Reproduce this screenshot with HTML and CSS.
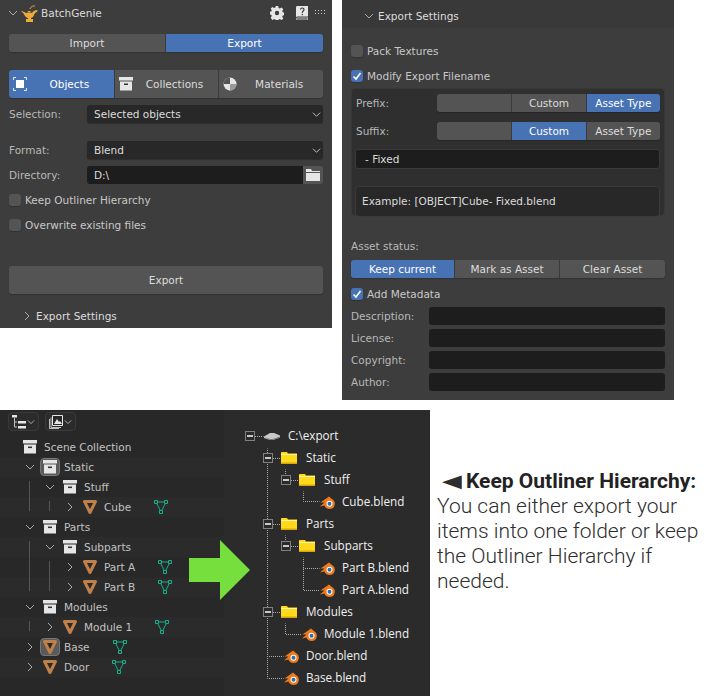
FILE: index.html
```html
<!DOCTYPE html>
<html lang="en">
<head>
    <meta charset="UTF-8">
    <meta name="viewport" content="width=device-width, initial-scale=1.0">
    <title>BatchGenie Export</title>
    <link rel="stylesheet" href="styles.css">
</head>
<body>
    <svg class="defs" width="0" height="0">
        <symbol id="box" viewBox="0 0 14 14">
            <path d="M0 0h14v3.500H0z" fill="#e6e6e6"/>
            <path d="M1 4.500h12V13.500H1z" fill="#e6e6e6"/>
            <path d="M5 6.500h4v1.600H5z" fill="#333"/>
        </symbol>
        <symbol id="cone" viewBox="0 0 14 14">
            <path d="M1.500 1.500h11L7 12.500z" fill="#2b2b2b" stroke="#c0804a" stroke-width="3" stroke-linejoin="round"/>
        </symbol>
        <symbol id="mesh" viewBox="0 0 14 14">
            <path d="M2 2h10L7 12z" fill="none" stroke="#12b28c" stroke-width="1"/>
            <path d="M.5.500h3v3h-3zM10.500.500h3v3h-3zM5.500 10.500h3v3h-3z" fill="#282828" stroke="#12b28c" stroke-width="1"/>
        </symbol>
        <symbol id="folder" viewBox="0 0 16 12">
            <path d="M0 1C0 .300.300 0 1 0h5l1 1.500h9V12H0z" fill="#ffd91a"/>
            <path d="M0 2h16v1H0z" fill="#fff4a0"/>
            <path d="M0 10.500h16V12H0z" fill="#d9a40c"/>
        </symbol>
        <symbol id="blend" viewBox="0 0 15 13">
            <path d="M9 .5 .5 6.500h4L0 10.500l4.500-1C5 11.500 7 13 9.500 13a5.300 5.300 0 0 0 2.800-9.800z" fill="#ee7a1c"/>
            <circle cx="9.500" cy="7.800" r="3" fill="#fff"/>
            <circle cx="9.500" cy="7.800" r="2" fill="#2f6da8"/>
        </symbol>
        <symbol id="chev-down" viewBox="0 0 10 10">
            <path d="M1 3l4 4 4-4" fill="none" stroke="currentColor" stroke-width="1"/>
        </symbol>
        <symbol id="chev-right" viewBox="0 0 10 10">
            <path d="M3 1l4 4-4 4" fill="none" stroke="currentColor" stroke-width="1"/>
        </symbol>
    </svg>

    <div class="top-row">
        <section class="panel panel-main">
            <div class="panel-head">
                <svg class="chev"><use href="#chev-down"/></svg>
                <svg class="lamp" viewBox="0 0 17 17">
                    <path d="M0 6c2 0 3 1 5 2h6c1-2 3-3 5.500-3L16 7c-1.500 0-2.500 2-3.500 4-.5 1.500-2.500 2-2.500 2v1h2v3H5v-3h2v-1C4 13 4 9 0 6z" fill="#eeab3c"/>
                    <path d="M6 7.500c1-2 3.500-2 4.500 0z" fill="#eeab3c"/>
                    <path d="M9 4c1-3 3-3 5-3" fill="none" stroke="#eeab3c" stroke-width="1"/>
                </svg>
                <span class="panel-title">BatchGenie</span>
                <svg class="gear" viewBox="0 0 14 14">
                    <path d="M5.800 0h2.400l.4 2 1.300.6 1.700-1.100 1.700 1.700-1.100 1.700.6 1.300 2 .4v2.400l-2 .4-.6 1.300 1.100 1.700-1.700 1.700-1.700-1.100-1.300.6-.4 2H5.800l-.4-2-1.300-.6-1.700 1.100L.7 11.800l1.100-1.700-.6-1.300-2-.4V6l2-.4.6-1.300L.7 2.600 2.400.9l1.700 1.100 1.300-.6z" fill="#e6e6e6"/>
                    <circle cx="7" cy="7" r="2.200" fill="#3d3d3d"/>
                </svg>
                <svg class="book" viewBox="0 0 12 14">
                    <path d="M0 1.500C0 .5.500 0 1.500 0H12v10.500H1.500C.500 10.500 0 11 0 12z" fill="#e6e6e6"/>
                    <path d="M1 12h11v2H1.500C.500 14 0 13 1 12z" fill="none" stroke="#e6e6e6" stroke-width=".8"/>
                    <path d="M4.500 3.500C4.500 1.500 8 1.500 8 3.500 8 5 6.300 5 6.300 6.800M6.300 7.800v1.400" fill="none" stroke="#3d3d3d" stroke-width="1.200"/>
                </svg>
                <span class="grip"></span>
            </div>

            <div class="seg mode-seg">
                <button class="seg-btn">Import</button>
                <button class="seg-btn on">Export</button>
            </div>

            <div class="seg seg-3 tabs">
                <button class="seg-btn tab on">
                    <svg class="tab-icon" viewBox="0 0 14 14">
                        <path d="M.5 3V.5H3M11 .5h2.500V3M13.500 11v2.500H11M3 13.500H.5V11" fill="none" stroke="#e6e6e6" stroke-width="1"/>
                        <path d="M3 3h8v8H3z" fill="#fff"/>
                    </svg>
                    <span>Objects</span>
                </button>
                <button class="seg-btn tab">
                    <svg class="tab-icon"><use href="#box"/></svg>
                    <span>Collections</span>
                </button>
                <button class="seg-btn tab">
                    <svg class="tab-icon" viewBox="0 0 14 14">
                        <circle cx="7" cy="7" r="6.500" fill="#e6e6e6"/>
                        <path d="M7 7V.5A6.500 6.500 0 0 0 .5 7z" fill="#555"/>
                        <path d="M7 7h6.500A6.500 6.500 0 0 1 7 13.500z" fill="#999"/>
                    </svg>
                    <span>Materials</span>
                </button>
            </div>

            <div class="field-row first">
                <label class="field-label">Selection:</label>
                <div class="dropdown">Selected objects<svg class="drop-chev"><use href="#chev-down"/></svg></div>
            </div>
            <div class="field-row format">
                <label class="field-label">Format:</label>
                <div class="dropdown">Blend<svg class="drop-chev"><use href="#chev-down"/></svg></div>
            </div>
            <div class="field-row dir">
                <label class="field-label">Directory:</label>
                <div class="input dir-input">D:\</div>
                <button class="folder-btn">
                    <svg viewBox="0 0 14 12"><path d="M0 0h5l1 2h8v1H0zM0 4h14v8H0z" fill="#e6e6e6"/></svg>
                </button>
            </div>

            <div class="check keep"><span class="box"></span>Keep Outliner Hierarchy</div>
            <div class="check overwrite"><span class="box"></span>Overwrite existing files</div>

            <button class="big-btn">Export</button>

            <div class="sub-head">
                <svg class="chev"><use href="#chev-right"/></svg>
                <span>Export Settings</span>
            </div>
        </section>

        <section class="panel panel-settings">
            <div class="settings-head">
                <svg class="chev"><use href="#chev-down"/></svg>
                <span>Export Settings</span>
            </div>
            <div class="settings-body">
                <div class="check"><span class="box"></span>Pack Textures</div>
                <div class="check modify"><span class="box ticked"><svg viewBox="0 0 12 12"><path d="M2.500 6.500l2.500 2.500 4.500-6" fill="none" stroke="#fff" stroke-width="1.600"/></svg></span>Modify Export Filename</div>

                <div class="inset">
                    <div class="name-row">
                        <label class="field-label">Prefix:</label>
                        <div class="seg seg-3 name-seg">
                            <button class="seg-btn"></button>
                            <button class="seg-btn">Custom</button>
                            <button class="seg-btn on">Asset Type</button>
                        </div>
                    </div>
                    <div class="name-row suffix">
                        <label class="field-label">Suffix:</label>
                        <div class="seg seg-3 name-seg">
                            <button class="seg-btn"></button>
                            <button class="seg-btn on">Custom</button>
                            <button class="seg-btn">Asset Type</button>
                        </div>
                    </div>
                    <div class="input fixed-input">- Fixed</div>
                    <div class="example">Example: [OBJECT]Cube- Fixed.blend</div>
                </div>

                <div class="status-label field-label">Asset status:</div>
                <div class="seg status-seg">
                    <button class="seg-btn on">Keep current</button>
                    <button class="seg-btn">Mark as Asset</button>
                    <button class="seg-btn">Clear Asset</button>
                </div>
                <div class="check meta"><span class="box ticked"><svg viewBox="0 0 12 12"><path d="M2.500 6.500l2.500 2.500 4.500-6" fill="none" stroke="#fff" stroke-width="1.600"/></svg></span>Add Metadata</div>
                <div class="meta-row"><label class="field-label">Description:</label><div class="input"></div></div>
                <div class="meta-row"><label class="field-label">License:</label><div class="input"></div></div>
                <div class="meta-row"><label class="field-label">Copyright:</label><div class="input"></div></div>
                <div class="meta-row"><label class="field-label">Author:</label><div class="input"></div></div>
            </div>
        </section>
    </div>

    <div class="bottom-row">
        <section class="outliner">
            <div class="outliner-bar">
                <span class="bar-btn">
                    <svg class="bar-icon" viewBox="0 0 14 14"><path d="M0 0h5v2.500H0zM6 6h8v2.500H6zM6 11h8v2.500H6z" fill="#e6e6e6"/><path d="M2.500 3v9H5M2.500 7H5" fill="none" stroke="#e6e6e6" stroke-width=".8"/></svg>
                    <svg class="bar-chev"><use href="#chev-down"/></svg>
                </span>
                <span class="bar-btn">
                    <svg class="bar-icon" viewBox="0 0 14 14"><path d="M3.500.5h10v10h-10z" fill="#282828" stroke="#e6e6e6"/><path d="M5 9l3-5 2 3 1-1 2 3z" fill="#e6e6e6"/><path d="M2 2.500v10h10M.5 4v9.500h9.500" fill="none" stroke="#e6e6e6" stroke-width=".8"/></svg>
                    <svg class="bar-chev"><use href="#chev-down"/></svg>
                </span>
            </div>
            <div class="row root"><svg class="row-icon"><use href="#box"/></svg><span>Scene Collection</span></div>
            <div class="row d1 alt"><svg class="twist"><use href="#chev-down"/></svg><span class="active-icon"><svg class="row-icon"><use href="#box"/></svg></span><span>Static</span></div>
            <div class="row d2"><svg class="twist"><use href="#chev-down"/></svg><svg class="row-icon"><use href="#box"/></svg><span>Stuff</span></div>
            <div class="row d3 alt"><svg class="twist"><use href="#chev-right"/></svg><svg class="row-icon"><use href="#cone"/></svg><span>Cube</span><svg class="mesh-icon"><use href="#mesh"/></svg></div>
            <div class="row d1"><svg class="twist"><use href="#chev-down"/></svg><svg class="row-icon"><use href="#box"/></svg><span>Parts</span></div>
            <div class="row d2 alt"><svg class="twist"><use href="#chev-down"/></svg><svg class="row-icon"><use href="#box"/></svg><span>Subparts</span></div>
            <div class="row d3"><svg class="twist"><use href="#chev-right"/></svg><svg class="row-icon"><use href="#cone"/></svg><span>Part A</span><svg class="mesh-icon"><use href="#mesh"/></svg></div>
            <div class="row d3 alt"><svg class="twist"><use href="#chev-right"/></svg><svg class="row-icon"><use href="#cone"/></svg><span>Part B</span><svg class="mesh-icon"><use href="#mesh"/></svg></div>
            <div class="row d1"><svg class="twist"><use href="#chev-down"/></svg><svg class="row-icon"><use href="#box"/></svg><span>Modules</span></div>
            <div class="row d2 alt"><svg class="twist"><use href="#chev-right"/></svg><svg class="row-icon"><use href="#cone"/></svg><span>Module 1</span><svg class="mesh-icon"><use href="#mesh"/></svg></div>
            <div class="row d1"><svg class="twist"><use href="#chev-right"/></svg><span class="active-icon"><svg class="row-icon"><use href="#cone"/></svg></span><span>Base</span><svg class="mesh-icon"><use href="#mesh"/></svg></div>
            <div class="row d1 alt"><svg class="twist"><use href="#chev-right"/></svg><svg class="row-icon"><use href="#cone"/></svg><span>Door</span><svg class="mesh-icon"><use href="#mesh"/></svg></div>
            <svg class="guides" width="224" height="286">
                <path d="M29.500 71v30M49.500 91v10M29.500 131v50M49.500 151v30M29.500 211v10" stroke="#555" fill="none"/>
            </svg>
        </section>

        <section class="tree">
            <svg class="tree-lines" width="206" height="286">
                <path d="M26 26h14M44 48h14M62 70h14M80 81v10h16M44 114h14M62 136h14M80 147v33h16M80 158h16M44 202h14M62 213v11h16M44 38v230M44 246h16M44 268h16M62 59v12M62 125v12" stroke="#aaa" stroke-dasharray="1 1" stroke-dashoffset=".5" fill="none" transform="translate(-.5 .5)"/>
            </svg>
            <div class="tree-row t0">
                <span class="exp"></span>
                <svg class="drive" viewBox="0 0 16 7"><path d="M0 3.500 6 0h4l6 2.500v2L9 7H6L0 5z" fill="#c9c9c9"/><path d="M0 4l6 3h3l7-2.500v-1L9 6H6z" fill="#777"/></svg>
                <span>C:\export</span>
            </div>
            <div class="tree-row t1"><span class="exp"></span><svg class="folder"><use href="#folder"/></svg><span>Static</span></div>
            <div class="tree-row t2"><span class="exp"></span><svg class="folder"><use href="#folder"/></svg><span>Stuff</span></div>
            <div class="tree-row t3"><svg class="blend"><use href="#blend"/></svg><span>Cube.blend</span></div>
            <div class="tree-row t1"><span class="exp"></span><svg class="folder"><use href="#folder"/></svg><span>Parts</span></div>
            <div class="tree-row t2"><span class="exp"></span><svg class="folder"><use href="#folder"/></svg><span>Subparts</span></div>
            <div class="tree-row t3"><svg class="blend"><use href="#blend"/></svg><span>Part B.blend</span></div>
            <div class="tree-row t3"><svg class="blend"><use href="#blend"/></svg><span>Part A.blend</span></div>
            <div class="tree-row t1"><span class="exp"></span><svg class="folder"><use href="#folder"/></svg><span>Modules</span></div>
            <div class="tree-row t2b"><svg class="blend"><use href="#blend"/></svg><span>Module 1.blend</span></div>
            <div class="tree-row t1b"><svg class="blend"><use href="#blend"/></svg><span>Door.blend</span></div>
            <div class="tree-row t1b"><svg class="blend"><use href="#blend"/></svg><span>Base.blend</span></div>
        </section>

        <section class="note">
            <p><span class="note-arrow">◀</span><b>Keep Outliner Hierarchy:</b> You can either export your items into one folder or keep the Outliner Hierarchy if needed.</p>
        </section>

        <svg class="arrow" width="62" height="60" viewBox="0 0 62 60"><path d="M0 18h31V0l30 30-30 30V42H0z" fill="#76de3d"/></svg>
    </div>
</body>
</html>
```

FILE: styles.css
```css
:root {
    --panel: #3d3d3d;
    --btn: #545454;
    --active: #4772b3;
    --input: #1d1d1d;
    --drop: #282828;
    --label: #b8b8b8;
    --text: #dcdcdc;
}
body {
    margin: 0;
    width: 710px;
    height: 696px;
    overflow: hidden;
    background-color: #fff;
    font-family: 'DejaVu Sans', sans-serif;
    font-size: 10.5px;
}
button {
    font: inherit;
    border: none;
    padding: 0;
    color: inherit;
}
.defs {
    position: absolute;
}
.top-row {
    display: flex;
    align-items: flex-start;
    gap: 10px;
    height: 400px;
    margin-bottom: 10px;
}
.bottom-row {
    position: relative;
    display: flex;
    height: 286px;
}
.panel {
    background-color: var(--panel);
    color: var(--text);
    width: 332px;
    box-sizing: border-box;
}
.panel-main {
    height: 328px;
    padding: 0 9px;
}
.panel-settings {
    height: 400px;
}
.chev {
    width: 10px;
    height: 10px;
    color: #aaa;
    flex: none;
}

/* top panel */
.panel-head {
    display: flex;
    align-items: center;
    height: 26px;
}
.panel-head .chev {
    margin-left: -1px;
}
.lamp {
    width: 17px;
    height: 17px;
    margin-left: 3px;
}
.panel-title {
    margin-left: 3px;
    flex: 1;
}
.gear {
    width: 14px;
    height: 14px;
}
.book {
    width: 12px;
    height: 14px;
    margin-left: 12px;
}
.grip {
    width: 12px;
    height: 6px;
    margin: 0 -3px 2px 6px;
    background-image: radial-gradient(circle, #ccc 0.7px, transparent 0.9px);
    background-size: 3px 3px;
}
.seg {
    display: grid;
    border-radius: 3px;
    overflow: hidden;
    height: 18px;
    box-shadow: 0 1px 1px rgba(0, 0, 0, 0.2);
}
.seg-3 {
    grid-template-columns: 1fr 1fr 1fr;
}
.seg-btn {
    background-color: var(--btn);
    color: var(--text);
    text-align: center;
    border-left: 1px solid #3a3a3a;
    white-space: nowrap;
}
.seg-btn:first-child {
    border-left: none;
}
.seg-btn.on {
    background-color: var(--active);
    color: #fff;
}
.mode-seg {
    margin-top: 8px;
    grid-template-columns: 156px 158px;
}
.tabs {
    margin-top: 18px;
    height: 28px;
}
.tab {
    display: flex;
    align-items: center;
    padding-left: 4px;
}
.tab span {
    flex: 1;
    padding-right: 2px;
}
.tab-icon {
    width: 14px;
    height: 14px;
}
.field-row {
    display: flex;
    height: 18px;
    align-items: center;
}
.field-row.first {
    margin-top: 7px;
}
.field-row.format {
    margin-top: 18px;
}
.field-row.dir {
    margin-top: 7px;
}
.field-label {
    color: var(--label);
}
.field-row .field-label {
    width: 78px;
    flex: none;
}
.dropdown {
    display: flex;
    align-items: center;
    justify-content: space-between;
    flex: 1;
    height: 18px;
    padding: 0 2px 0 7px;
    background-color: var(--drop);
    border-radius: 3px;
    box-shadow: 0 1px 1px rgba(0, 0, 0, 0.25);
}
.drop-chev {
    width: 9px;
    height: 9px;
    color: #ccc;
}
.input {
    height: 18px;
    background-color: var(--input);
    border-radius: 3px;
    box-sizing: border-box;
    line-height: 18px;
}
.dir-input {
    flex: 1;
    padding-left: 7px;
    border-radius: 3px 0 0 3px;
}
.folder-btn {
    display: flex;
    align-items: center;
    justify-content: center;
    width: 20px;
    height: 18px;
    background-color: var(--btn);
    border-radius: 0 3px 3px 0;
}
.folder-btn svg {
    width: 14px;
    height: 12px;
}
.check {
    display: flex;
    align-items: center;
    gap: 4px;
    height: 13px;
    color: #c8c8c8;
}
.box {
    width: 12px;
    height: 12px;
    background-color: #545454;
    border-radius: 3px;
    flex: none;
    box-shadow: 0 1px 1px rgba(0, 0, 0, 0.2);
}
.box.ticked {
    background-color: var(--active);
}
.box svg {
    display: block;
}
.keep {
    margin-top: 9px;
}
.overwrite {
    margin-top: 12px;
}
.big-btn {
    display: block;
    width: 100%;
    height: 28px;
    margin-top: 35px;
    background-color: var(--btn);
    color: var(--text);
    border-radius: 3px;
    box-shadow: 0 1px 1px rgba(0, 0, 0, 0.2);
}
.sub-head {
    display: flex;
    align-items: center;
    gap: 4px;
    height: 20px;
    margin: 12px 0 0 13px;
}

/* export settings panel */
.settings-head {
    display: flex;
    align-items: center;
    gap: 4px;
    height: 28px;
    padding: 4px 0 0 22px;
    box-sizing: border-box;
    background-color: #393939;
}
.settings-body {
    padding: 16px 9px 0;
}
.modify {
    margin-top: 12px;
}
.inset {
    margin-top: 6px;
    height: 128px;
    box-sizing: border-box;
    padding: 5px 4px 0;
    background-color: #2f2f2f;
    border: 1px solid #383838;
    border-radius: 4px;
}
.name-row {
    display: flex;
    align-items: center;
    justify-content: space-between;
}
.name-row.suffix {
    margin-top: 10px;
}
.name-seg {
    width: 223px;
}
.fixed-input {
    margin: 9px 0 0 -1px;
    height: 20px;
    line-height: 19px;
    padding-left: 9px;
    border: 1px solid #3a3a3a;
}
.example {
    height: 31px;
    line-height: 29px;
    margin: 17px 0 0 -1px;
    padding-left: 6px;
    box-sizing: border-box;
    background-color: #282828;
    border: 1px solid #3a3a3a;
    border-radius: 4px;
}
.status-label {
    margin-top: 24px;
    height: 13px;
}
.status-seg {
    margin-top: 7px;
    grid-template-columns: 103px 105px 106px;
}
.meta {
    margin-top: 9px;
}
.meta-row {
    display: flex;
    align-items: center;
    height: 18px;
    margin-top: 4px;
}
.meta + .meta-row {
    margin-top: 7px;
}
.meta-row .field-label {
    width: 78px;
    flex: none;
}
.meta-row .input {
    flex: 1;
}

/* outliner */
.outliner {
    position: relative;
    width: 224px;
    flex: none;
    background-color: #282828;
    color: #c2c2c2;
}
.outliner-bar {
    display: flex;
    gap: 6px;
    height: 27px;
    padding: 2px 0 0 8px;
    box-sizing: border-box;
}
.bar-btn {
    display: flex;
    align-items: center;
    justify-content: center;
    gap: 1px;
    width: 31px;
    height: 19px;
    box-sizing: border-box;
    background-color: #2b2b2b;
    border: 1px solid #3a3a3a;
    border-radius: 4px;
}
.bar-icon {
    width: 14px;
    height: 14px;
}
.bar-chev {
    width: 8px;
    height: 8px;
    color: #ccc;
}
.row {
    display: flex;
    align-items: center;
    height: 20px;
}
.row.alt {
    background-color: #2b2b2b;
}
.root {
    padding-left: 23px;
}
.d1 {
    padding-left: 25px;
}
.d2 {
    padding-left: 45px;
}
.d3 {
    padding-left: 65px;
}
.twist {
    width: 10px;
    height: 10px;
    flex: none;
    color: #aaa;
    margin-right: 8px;
}
.row-icon {
    width: 14px;
    height: 14px;
    flex: none;
    margin-right: 7px;
}
.active-icon {
    display: flex;
    align-items: center;
    justify-content: center;
    width: 20px;
    height: 18px;
    margin: 0 4px 0 -3px;
    background-color: #5a5a5a;
    border: 1px solid #777;
    border-radius: 4px;
    box-sizing: border-box;
}
.active-icon .row-icon {
    margin: 0;
}
.mesh-icon {
    width: 14px;
    height: 14px;
    margin-left: 23px;
    flex: none;
}
.guides {
    position: absolute;
    left: 0;
    top: 0;
}

/* file tree */
.tree {
    position: relative;
    width: 206px;
    flex: none;
    padding-top: 15px;
    box-sizing: border-box;
    background-color: #2b2b2b;
    color: #f0f0f0;
    font-family: 'Open Sans', sans-serif;
    font-size: 11.700px;
}
.tree-lines {
    position: absolute;
    left: 0;
    top: 0;
}
.tree-row {
    position: relative;
    display: flex;
    align-items: center;
    height: 22px;
}
.tree-row span:last-child {
    position: relative;
    top: -1px;
}
.exp {
    position: relative;
    width: 10px;
    height: 10px;
    box-sizing: border-box;
    border: 1px solid #808080;
    background-color: #2b2b2b;
    flex: none;
}
.exp::after {
    content: '';
    position: absolute;
    left: 1px;
    right: 1px;
    top: 3px;
    height: 2px;
    background-color: #c8c8c8;
}
.t0 {
    padding-left: 21px;
}
.t1 {
    padding-left: 39px;
}
.t2 {
    padding-left: 57px;
}
.t3 {
    padding-left: 96px;
}
.t2b {
    padding-left: 78px;
}
.t1b {
    padding-left: 60px;
}
.drive {
    width: 16px;
    height: 7px;
    margin: 0 8px 0 9px;
}
.folder {
    width: 16px;
    height: 12px;
    margin: 0 9px 0 8px;
}
.blend {
    width: 15px;
    height: 13px;
    margin-right: 7px;
}

/* side note */
.note {
    width: 274px;
    padding: 59px 0 0 7px;
    box-sizing: border-box;
    color: #2e2e2e;
    font-family: Roboto, sans-serif;
    font-size: 21px;
    font-weight: 300;
    line-height: 25px;
}
.note p {
    margin: 0;
}
.note b {
    font-weight: 700;
    color: #222;
}
.note-arrow {
    display: inline-block;
    width: 21px;
    margin: 0 3px 0 5px;
    font-family: 'DejaVu Sans', sans-serif;
    font-size: 26px;
    line-height: 20px;
    vertical-align: -2px;
    transform: scaleY(0.7);
}
.arrow {
    position: absolute;
    left: 189px;
    top: 130px;
}
```
